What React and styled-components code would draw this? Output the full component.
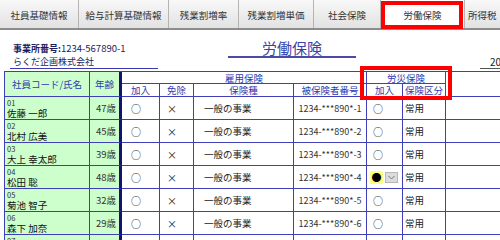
import React from "react";
import styled, { createGlobalStyle, css } from "styled-components";

const BORDER = "#3f3fb8";
const NAVY = "#14146e";
const GREEN = "#ccffcc";
const HEAD_TEXT = "#2c3cb0";

const GlobalStyle = createGlobalStyle`
  html, body { margin: 0; padding: 0; background: #fff; overflow: hidden; }
  body {
    width: 500px; height: 240px;
    font-family: "Noto Sans CJK JP", "Noto Sans", sans-serif;
    color: #222;
  }
`;

const Page = styled.div`
  width: 500px;
  height: 240px;
  overflow: hidden;
`;

/* ---------- tab strip ---------- */
const TabBar = styled.div`
  display: flex;
  height: 28px;
  border-bottom: 2px solid #8c8c8c;
  background: linear-gradient(#f8f8f8, #e2e2e2);
`;

const Tab = styled.div`
  position: relative;
  flex: 0 0 ${(p) => p.$w}px;
  box-sizing: border-box;
  display: flex;
  align-items: center;
  justify-content: ${(p) => (p.$left ? "flex-start" : "center")};
  padding: 2px 0 0 ${(p) => p.$pl || 0}px;
  border-right: 1px solid #b4b4b4;
  font-size: 9.5px;
  color: #333;
  white-space: nowrap;
  ${(p) =>
    p.$active &&
    css`
      background: #fff;
    `}
`;

const RedFrame = styled.span`
  position: absolute;
  box-sizing: border-box;
  border: 4px solid #f00;
  pointer-events: none;
  z-index: 3;
  left: ${(p) => p.$x}px;
  top: ${(p) => p.$y}px;
  width: ${(p) => p.$w}px;
  height: ${(p) => p.$h}px;
`;

/* ---------- info strip ---------- */
const InfoBar = styled.div`
  display: flex;
  align-items: flex-start;
  height: 41px;
  & > * {
    flex: none;
  }
`;

const Office = styled.div`
  margin: 12px 0 0 10px;
  width: 148px;
  box-sizing: border-box;
  padding-left: 3px;
  border-bottom: 1px solid #3a3ab0;
  color: #1c1c5c;
  font-size: 9px;
  line-height: 13px;
  white-space: nowrap;
`;

const OfficeLabel = styled.span`
  font-weight: 700;
`;

const OfficeNumber = styled.span`
  font-size: 9.5px;
`;

const Title = styled.div`
  margin: 9px 0 0 70px;
  width: 128px;
  text-align: center;
  font-size: 15px;
  line-height: 17px;
  color: #3a44a8;
  border-bottom: 2px solid #4a4aa8;
`;

const DateMark = styled.div`
  margin: 26px 0 0 124px;
  width: 30px;
  box-sizing: border-box;
  padding-left: 10px;
  font-size: 10px;
  line-height: 12px;
  color: #222;
  border-bottom: 1px solid #555;
`;

/* ---------- table ---------- */
const Grid = styled.div`
  position: relative;
  display: grid;
  grid-template-columns: 85px 32px 38px 34px 100px 73px 36px 43px 80px;
  grid-template-rows: 12px 13px repeat(7, 23px);
  margin-left: 4px;
  width: max-content;
  border-left: 1px solid ${BORDER};
  border-top: 1px solid ${BORDER};
`;

const Cell = styled.div`
  box-sizing: border-box;
  min-width: 0;
  display: flex;
  align-items: center;
  overflow: hidden;
  white-space: nowrap;
  border-right: 1px solid ${BORDER};
  border-bottom: 1px solid ${BORDER};
  background: ${(p) => (p.$green ? GREEN : "#fff")};
  font-size: 9.5px;
  color: #222;
  ${(p) =>
    p.$thick &&
    css`
      border-right: 3px solid ${NAVY};
    `}
  ${(p) =>
    p.$open &&
    css`
      border-right: none;
    `}
`;

const HeadCell = styled(Cell)`
  justify-content: center;
  overflow: visible;
  color: ${HEAD_TEXT};
  font-size: 9.5px;
  line-height: 10px;
  grid-column: span ${(p) => p.$span || 1};
  grid-row: span ${(p) => p.$rows || 1};
`;

const NameCell = styled(Cell)`
  flex-direction: column;
  align-items: flex-start;
  justify-content: flex-start;
  padding: 1px 0 0 2px;
`;

const Code = styled.span`
  font-size: 7.5px;
  line-height: 9px;
  color: #333;
`;

const Name = styled.span`
  font-size: 9.5px;
  line-height: 12px;
  color: #111;
`;

const AgeCell = styled(Cell)`
  justify-content: flex-end;
  padding-right: 3px;
  font-size: 9.5px;
  color: #333;
`;

const MarkCell = styled(Cell)`
  padding-left: ${(p) => p.$pl}px;
  font-size: ${(p) => p.$fs || 10}px;
  color: #1e1e1e;
`;

const TextCell = styled(Cell)`
  padding-left: ${(p) => p.$pl}px;
  color: #222;
`;

const NumberCell = styled(Cell)`
  justify-content: center;
  font-size: 9px;
  color: #333;
`;

const Picker = styled.span`
  display: flex;
  align-items: center;
  gap: 2px;
`;

const PickValue = styled.span`
  width: 13px;
  height: 13px;
  display: flex;
  align-items: center;
  justify-content: center;
  background: #ffff80;
  font-size: 10px;
  color: #000;
`;

const PickButton = styled.span`
  width: 13px;
  height: 11px;
  box-sizing: border-box;
  display: flex;
  align-items: center;
  justify-content: center;
  background: #dcdcdc;
  border: 1px solid #b8b8b8;
`;

const tabs = [
  { label: "社員基礎情報", w: 79, pl: 0 },
  { label: "給与計算基礎情報", w: 90 },
  { label: "残業割増率", w: 70 },
  { label: "残業割増単価", w: 75 },
  { label: "社会保険", w: 67 },
  { label: "労働保険", w: 84, active: true },
  { label: "所得税・住民税", w: 80, left: true, pl: 3 },
];

const people = [
  { code: "01", name: "佐藤 一郎", age: 47 },
  { code: "02", name: "北村 広美", age: 45 },
  { code: "03", name: "大上 幸太郎", age: 39 },
  { code: "04", name: "松田 聡", age: 48, picking: true },
  { code: "05", name: "菊池 智子", age: 32 },
  { code: "06", name: "森下 加奈", age: 29 },
  { code: "07", name: "山本 健太", age: 41 },
];

function Row({ p, i }) {
  return (
    <>
      <NameCell $green>
        <Code>{p.code}</Code>
        <Name>{p.name}</Name>
      </NameCell>
      <AgeCell $green $thick>
        {p.age}歳
      </AgeCell>
      <MarkCell $pl={9}>○</MarkCell>
      <MarkCell $pl={7}>×</MarkCell>
      <TextCell $pl={10}>一般の事業</TextCell>
      <NumberCell>1234-***890*-{i + 1}</NumberCell>
      {p.picking ? (
        <MarkCell $pl={3}>
          <Picker>
            <PickValue>●</PickValue>
            <PickButton>
              <svg width="7" height="5" viewBox="0 0 7 5">
                <path d="M0.5 1 L3.5 4 L6.5 1" fill="none" stroke="#777" strokeWidth="1" />
              </svg>
            </PickButton>
          </Picker>
        </MarkCell>
      ) : (
        <MarkCell $pl={6}>○</MarkCell>
      )}
      <TextCell $pl={2}>常用</TextCell>
      <Cell $open />
    </>
  );
}

export default function App() {
  return (
    <Page>
      <GlobalStyle />
      <TabBar>
        {tabs.map((t) => (
          <Tab key={t.label} $w={t.w} $pl={t.pl} $left={t.left} $active={t.active}>
            {t.label}
            {t.active && <RedFrame $x={0} $y={1} $w={82} $h={28} />}
          </Tab>
        ))}
      </TabBar>

      <InfoBar>
        <Office>
          <div>
            <OfficeLabel>事業所番号:</OfficeLabel>
            <OfficeNumber>1234-567890-1</OfficeNumber>
          </div>
          <div>らくだ企画株式会社</div>
        </Office>
        <Title>労働保険</Title>
        <DateMark>20</DateMark>
      </InfoBar>

      <Grid>
        <HeadCell $rows={2} $green>
          社員コード/氏名
        </HeadCell>
        <HeadCell $rows={2} $green $thick>
          年齢
        </HeadCell>
        <HeadCell $span={4}>雇用保険</HeadCell>
        <HeadCell $span={2}>労災保険</HeadCell>
        <HeadCell $rows={2} $open />
        <HeadCell>加入</HeadCell>
        <HeadCell>免除</HeadCell>
        <HeadCell>保険種</HeadCell>
        <HeadCell>被保険者番号</HeadCell>
        <HeadCell>加入</HeadCell>
        <HeadCell>保険区分</HeadCell>

        {people.map((p, i) => (
          <Row key={p.code} p={p} i={i} />
        ))}

        <RedFrame $x={355} $y={-6} $w={92} $h={34} />
      </Grid>
    </Page>
  );
}
